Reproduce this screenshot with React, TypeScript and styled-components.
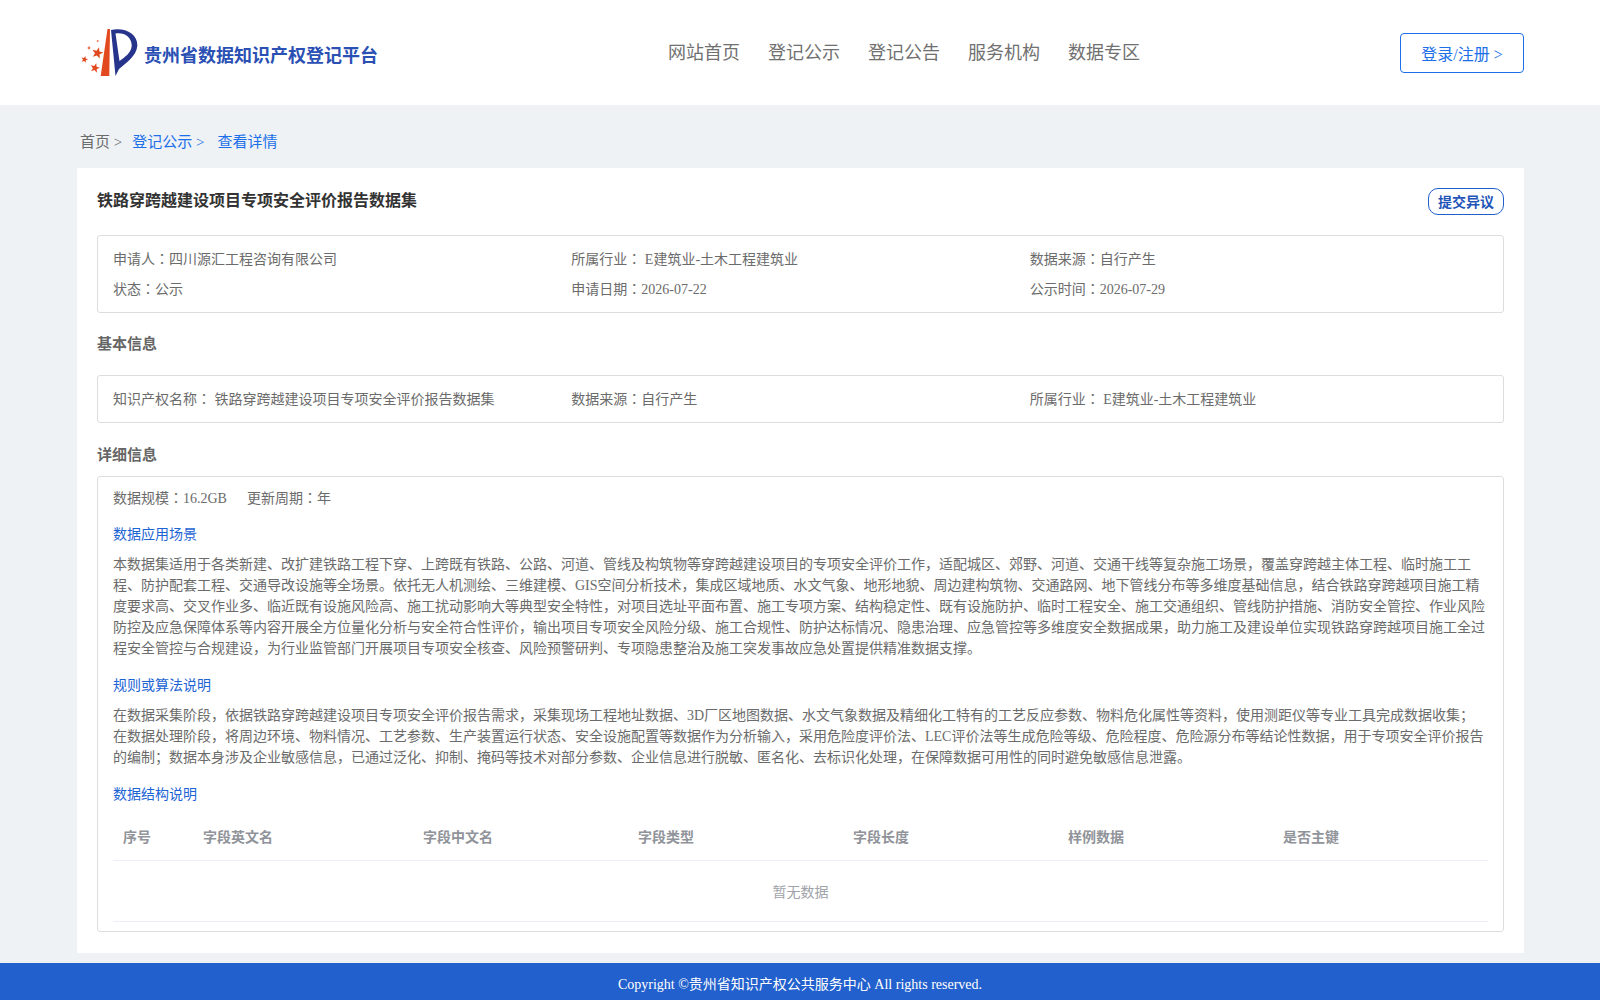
import React from 'react';
import styled, {createGlobalStyle} from 'styled-components';

const GlobalStyle = createGlobalStyle`
  html, body {
    margin: 0;
    padding: 0;
    background: #eef2f5;
  }
  body {
    font-family: "Liberation Serif", "Noto Sans CJK SC", serif;
    font-size: 14px;
    color: #6b6b6b;
  }
`

const Page = styled.div`
  width: 1600px;
  height: 1000px;
  display: flex;
  flex-direction: column;
  overflow: hidden;
`

const Header = styled.header`
  height: 105px;
  flex: none;
  background: #fff;
  display: grid;
  grid-template-columns: 588px auto 1fr;
  align-items: center;
  padding: 0 76px 0 80px;
  box-sizing: border-box;
`

const Brand = styled.div`
  display: flex;
  align-items: center;
  gap: 4px;
  margin-top: 3px;
`

const BrandName = styled.b`
  font-size: 18px;
  color: #2b50b4;
`

const Nav = styled.nav`
  display: flex;
  gap: 28px;
  margin-top: -4px;
  font-size: 18px;
  color: #707070;
`

const LoginButton = styled.a`
  justify-self: end;
  width: 124px;
  height: 40px;
  box-sizing: border-box;
  border: 1px solid #1c6fe8;
  border-radius: 4px;
  display: flex;
  align-items: center;
  justify-content: center;
  font-size: 16px;
  color: #1c6fe8;
`

const Main = styled.main`
  flex: none;
  height: 858px;
  padding: 0 76px 0 77px;
  display: flex;
  flex-direction: column;
  box-sizing: border-box;
`

const Breadcrumb = styled.div`
  height: 63px;
  display: flex;
  align-items: center;
  padding: 8px 0 0 3px;
  box-sizing: border-box;
  font-size: 15px;
`

const Crumb = styled.span<{$active?: boolean; $gap?: number}>`
  color: ${p => (p.$active ? '#1c6fe8' : '#6b6b6b')};
  margin-right: ${p => p.$gap ?? 0}px;
`

const Card = styled.section`
  height: 785px;
  box-sizing: border-box;
  background: #fff;
  padding: 20px;
`

const TitleRow = styled.div`
  display: flex;
  justify-content: space-between;
  align-items: flex-start;
  height: 47px;
`

const Title = styled.h1`
  margin: 0;
  font-size: 16px;
  line-height: 26px;
  color: #333;
`

const ObjectionButton = styled.a`
  width: 76px;
  height: 27px;
  box-sizing: border-box;
  border: 1px solid #1e5fcc;
  border-radius: 10px;
  padding-bottom: 2px;
  display: flex;
  align-items: center;
  justify-content: center;
  font-size: 14px;
  font-weight: 700;
  color: #1f55b8;
`

const InfoBox = styled.div`
  border: 1px solid #ddd;
  border-radius: 3px;
  padding: 9px 15px 7px;
  display: grid;
  grid-template-columns: repeat(3, 1fr);
  grid-auto-rows: 30px;
  align-items: center;
  line-height: 30px;
`

const SectionHead = styled.h2<{$mt: number; $mb: number}>`
  margin: ${p => p.$mt}px 0 ${p => p.$mb}px;
  font-size: 15px;
  line-height: 22px;
  font-weight: 700;
  color: #666;
`

const DetailBox = styled.div`
  border: 1px solid #ddd;
  border-radius: 3px;
  padding: 0 15px 10px;
  height: 456px;
  box-sizing: border-box;
`

const Metrics = styled.div`
  display: flex;
  gap: 20px;
  line-height: 44px;
  height: 42px;
`

const SubHead = styled.div`
  color: #1c64d4;
  line-height: 31px;
  height: 30px;
`

const Paragraph = styled.p`
  margin: 5px 0 11px;
  line-height: 21px;
`

const Table = styled.table`
  width: 1375px;
  border-collapse: collapse;
  table-layout: fixed;
  margin-top: 3px;
`

const Th = styled.th<{$w: number}>`
  width: ${p => p.$w}px;
  height: 48px;
  padding: 0 10px;
  box-sizing: border-box;
  text-align: left;
  font-size: 14px;
  font-weight: 700;
  color: #909399;
  border-bottom: 1px solid #ebeef5;
`

const EmptyCell = styled.td`
  height: 58px;
  text-align: center;
  color: #a0a3a9;
  border-bottom: 1px solid #ebeef5;
`

const Footer = styled.footer`
  flex: none;
  height: 37px;
  padding-top: 2px;
  box-sizing: border-box;
  background: #2260cd;
  color: #fff;
  display: flex;
  align-items: center;
  justify-content: center;
  font-size: 14px;
`

// the reference sets the colon in the middle of its cell, the TC cut does that too
const Colon = styled.span`
  font-family: "Noto Sans CJK TC", sans-serif;
  line-height: 0;
`

const Field = ({label, children}: {label: string; children: string}) => (
    <span>{label}<Colon>：</Colon>{children}</span>
);

function starPoints(cx: number, cy: number, r: number) {
    const pts: string[] = [];
    for (let i = 0; i < 10; i++) {
        const rad = i % 2 ? r * 0.42 : r;
        const a = -Math.PI / 2 + 0.25 + (i * Math.PI) / 5;
        pts.push(`${(cx + rad * Math.cos(a)).toFixed(2)},${(cy + rad * Math.sin(a)).toFixed(2)}`);
    }
    return pts.join(' ');
}

const Logo = () => (
    <svg width="60" height="52" viewBox="0 0 60 52">
        <path d="M27.5 1 L30 1 L29.3 48 L20.7 48 Z" fill="#e2491f"/>
        <path
            d="M31 2 C45 -1 58 6 57.3 18 C56.5 28 46 35 39 41 L35.5 48 Z M35.5 5.5 L39.5 33 C45 29 51 25 51.7 18 C52 9 44 4 35.5 5.5 Z"
            fill="#27348b"
            fillRule="evenodd"
        />
        <polygon points={starPoints(17.5, 25, 6)} fill="#e2491f"/>
        <polygon points={starPoints(4.5, 31.5, 3.6)} fill="#e2491f"/>
        <polygon points={starPoints(15, 40, 5)} fill="#e2491f"/>
        <circle cx="9" cy="20" r="1.4" fill="#ea7a55"/>
        <circle cx="17.7" cy="13" r="1" fill="#ea7a55"/>
    </svg>
);

const columns: [string, number][] = [
    ['序号', 80],
    ['字段英文名', 220],
    ['字段中文名', 215],
    ['字段类型', 215],
    ['字段长度', 215],
    ['样例数据', 215],
    ['是否主键', 215],
];

export default function App() {
    return (
        <Page>
            <GlobalStyle/>
            <Header>
                <Brand>
                    <Logo/>
                    <BrandName>贵州省数据知识产权登记平台</BrandName>
                </Brand>
                <Nav>
                    <span>网站首页</span>
                    <span>登记公示</span>
                    <span>登记公告</span>
                    <span>服务机构</span>
                    <span>数据专区</span>
                </Nav>
                <LoginButton>登录/注册 &gt;</LoginButton>
            </Header>
            <Main>
                <Breadcrumb>
                    <Crumb $gap={10}>首页 &gt;</Crumb>
                    <Crumb $active $gap={13}>登记公示 &gt;</Crumb>
                    <Crumb $active>查看详情</Crumb>
                </Breadcrumb>
                <Card>
                    <TitleRow>
                        <Title>铁路穿跨越建设项目专项安全评价报告数据集</Title>
                        <ObjectionButton>提交异议</ObjectionButton>
                    </TitleRow>
                    <InfoBox>
                        <Field label="申请人">四川源汇工程咨询有限公司</Field>
                        <Field label="所属行业"> E建筑业-土木工程建筑业</Field>
                        <Field label="数据来源">自行产生</Field>
                        <Field label="状态">公示</Field>
                        <Field label="申请日期">2026-07-22</Field>
                        <Field label="公示时间">2026-07-29</Field>
                    </InfoBox>
                    <SectionHead $mt={20} $mb={20}>基本信息</SectionHead>
                    <InfoBox>
                        <Field label="知识产权名称"> 铁路穿跨越建设项目专项安全评价报告数据集</Field>
                        <Field label="数据来源">自行产生</Field>
                        <Field label="所属行业"> E建筑业-土木工程建筑业</Field>
                    </InfoBox>
                    <SectionHead $mt={21} $mb={10}>详细信息</SectionHead>
                    <DetailBox>
                        <Metrics>
                            <Field label="数据规模">16.2GB</Field>
                            <Field label="更新周期">年</Field>
                        </Metrics>
                        <SubHead>数据应用场景</SubHead>
                        <Paragraph>本数据集适用于各类新建、改扩建铁路工程下穿、上跨既有铁路、公路、河道、管线及构筑物等穿跨越建设项目的专项安全评价工作，适配城区、郊野、河道、交通干线等复杂施工场景，覆盖穿跨越主体工程、临时施工工程、防护配套工程、交通导改设施等全场景。依托无人机测绘、三维建模、GIS空间分析技术，集成区域地质、水文气象、地形地貌、周边建构筑物、交通路网、地下管线分布等多维度基础信息，结合铁路穿跨越项目施工精度要求高、交叉作业多、临近既有设施风险高、施工扰动影响大等典型安全特性，对项目选址平面布置、施工专项方案、结构稳定性、既有设施防护、临时工程安全、施工交通组织、管线防护措施、消防安全管控、作业风险防控及应急保障体系等内容开展全方位量化分析与安全符合性评价，输出项目专项安全风险分级、施工合规性、防护达标情况、隐患治理、应急管控等多维度安全数据成果，助力施工及建设单位实现铁路穿跨越项目施工全过程安全管控与合规建设，为行业监管部门开展项目专项安全核查、风险预警研判、专项隐患整治及施工突发事故应急处置提供精准数据支撑。</Paragraph>
                        <SubHead>规则或算法说明</SubHead>
                        <Paragraph>在数据采集阶段，依据铁路穿跨越建设项目专项安全评价报告需求，采集现场工程地址数据、3D厂区地图数据、水文气象数据及精细化工特有的工艺反应参数、物料危化属性等资料，使用测距仪等专业工具完成数据收集；在数据处理阶段，将周边环境、物料情况、工艺参数、生产装置运行状态、安全设施配置等数据作为分析输入，采用危险度评价法、LEC评价法等生成危险等级、危险程度、危险源分布等结论性数据，用于专项安全评价报告的编制；数据本身涉及企业敏感信息，已通过泛化、抑制、掩码等技术对部分参数、企业信息进行脱敏、匿名化、去标识化处理，在保障数据可用性的同时避免敏感信息泄露。</Paragraph>
                        <SubHead>数据结构说明</SubHead>
                        <Table>
                            <thead>
                                <tr>
                                    {columns.map(([name, w]) => <Th key={name} $w={w}>{name}</Th>)}
                                </tr>
                            </thead>
                            <tbody>
                                <tr>
                                    <EmptyCell colSpan={7}>暂无数据</EmptyCell>
                                </tr>
                            </tbody>
                        </Table>
                    </DetailBox>
                </Card>
            </Main>
            <Footer>Copyright ©贵州省知识产权公共服务中心 All rights reserved.</Footer>
        </Page>
    );
}
